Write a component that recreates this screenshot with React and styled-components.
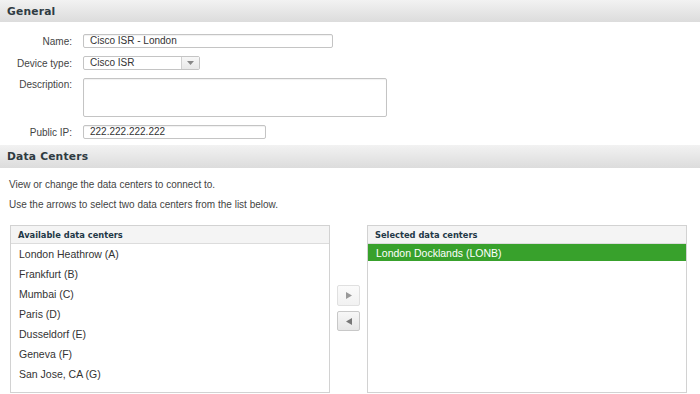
import React from 'react';
import styled, { createGlobalStyle } from 'styled-components';

const GlobalStyle = createGlobalStyle`
  body {
    margin: 0;
    background: #fff;
    font-family: 'Liberation Sans', Arial, sans-serif;
    color: #333;
  }
`;

const Page = styled.div`
  width: 700px;
  height: 394px;
  overflow: hidden;
  background: #fff;
`;

const SectionHeader = styled.div`
  height: ${(p) => p.height || 22}px;
  display: flex;
  align-items: center;
  padding-left: 7px;
  background: linear-gradient(#f2f2f2, #dcdcdc);
  font-family: 'DejaVu Sans', sans-serif;
  font-weight: 700;
  font-size: 10.7px;
  color: #2f3b42;
  letter-spacing: 0.2px;
`;

const Form = styled.div`
  display: flex;
  flex-direction: column;
  gap: 8px;
  padding: 12px 0 6px;
`;

const Row = styled.div`
  display: flex;
  align-items: ${(p) => (p.top ? 'flex-start' : 'center')};
  gap: 11px;
`;

const Label = styled.label`
  width: 72px;
  text-align: right;
  font-size: 10px;
  color: #444;
  padding-top: ${(p) => (p.top ? 1 : 0)}px;
`;

const Input = styled.div`
  box-sizing: border-box;
  width: ${(p) => p.width}px;
  height: ${(p) => p.height || 14}px;
  border: 1px solid #c4c4c4;
  border-radius: 2px;
  background: #fff;
  font-size: 10px;
  line-height: 12px;
  padding-left: 6px;
  color: #333;
  box-shadow: inset 0 1px 1px rgba(0, 0, 0, 0.06);
`;

const Select = styled.div`
  box-sizing: border-box;
  width: 117px;
  height: 14px;
  border: 1px solid #c4c4c4;
  border-radius: 2px;
  display: flex;
  font-size: 10px;
  color: #333;
`;

const SelectValue = styled.div`
  flex: 1;
  padding-left: 6px;
  line-height: 12px;
`;

const SelectArrow = styled.div`
  width: 17px;
  border-left: 1px solid #d0d0d0;
  background: linear-gradient(#f7f7f7, #e8e8e8);
  display: flex;
  align-items: center;
  justify-content: center;
`;

const Intro = styled.p`
  margin: 0;
  padding-left: 9px;
  font-size: 10px;
  line-height: 12px;
  color: #444;
`;

const IntroBlock = styled.div`
  display: flex;
  flex-direction: column;
  gap: 8px;
  padding-top: 11px;
`;

const Lists = styled.div`
  display: flex;
  align-items: flex-start;
  padding: 14px 0 0 10px;
`;

const Panel = styled.div`
  box-sizing: border-box;
  width: ${(p) => p.width}px;
  height: 168px;
  border: 1px solid #d2d2d2;
  background: #fff;
`;

const PanelHeader = styled.div`
  height: 17px;
  display: flex;
  align-items: center;
  padding-left: 7px;
  background: #f4f4f4;
  border-bottom: 1px solid #dcdcdc;
  font-family: 'DejaVu Sans', sans-serif;
  font-weight: 700;
  font-size: 8.3px;
  color: #1f3847;
`;

const Item = styled.div`
  height: ${(p) => (p.selected ? 17 : 20)}px;
  display: flex;
  align-items: center;
  padding-left: 8px;
  font-size: 10.5px;
  color: ${(p) => (p.selected ? '#fff' : '#333')};
  background: ${(p) => (p.selected ? '#38a12c' : 'transparent')};
`;

const Mover = styled.div`
  width: 37px;
  display: flex;
  flex-direction: column;
  align-items: center;
  gap: 5px;
  padding-top: 60px;
`;

const MoveButton = styled.button`
  box-sizing: border-box;
  width: 23px;
  height: ${(p) => (p.dim ? 21 : 20)}px;
  padding: 0;
  border: 1px solid ${(p) => (p.dim ? '#e0e0e0' : '#c8c8c8')};
  border-radius: 2px;
  background: ${(p) => (p.dim ? 'linear-gradient(#fbfbfb, #f1f1f1)' : 'linear-gradient(#f7f7f7, #e6e6e6)')};
  display: flex;
  align-items: center;
  justify-content: center;
`;

const Triangle = ({ dir, color }) => (
  <svg width="6" height="7" viewBox="0 0 6 7">
    {dir === 'right' ? (
      <path d="M0 0 L6 3.5 L0 7 Z" fill={color} />
    ) : (
      <path d="M6 0 L0 3.5 L6 7 Z" fill={color} />
    )}
  </svg>
);

const available = [
  'London Heathrow (A)',
  'Frankfurt (B)',
  'Mumbai (C)',
  'Paris (D)',
  'Dusseldorf (E)',
  'Geneva (F)',
  'San Jose, CA (G)',
];

const App = () => (
  <Page>
    <GlobalStyle />
    <SectionHeader>General</SectionHeader>
    <Form>
      <Row>
        <Label>Name:</Label>
        <Input width={250}>Cisco ISR - London</Input>
      </Row>
      <Row>
        <Label>Device type:</Label>
        <Select>
          <SelectValue>Cisco ISR</SelectValue>
          <SelectArrow>
            <svg width="7" height="4" viewBox="0 0 7 4">
              <path d="M0 0 L7 0 L3.5 4 Z" fill="#888" />
            </svg>
          </SelectArrow>
        </Select>
      </Row>
      <Row top>
        <Label top>Description:</Label>
        <Input width={304} height={39} />
      </Row>
      <Row>
        <Label>Public IP:</Label>
        <Input width={183}>222.222.222.222</Input>
      </Row>
    </Form>
    <SectionHeader height={23}>Data Centers</SectionHeader>
    <IntroBlock>
      <Intro>View or change the data centers to connect to.</Intro>
      <Intro>Use the arrows to select two data centers from the list below.</Intro>
    </IntroBlock>
    <Lists>
      <Panel width={320}>
        <PanelHeader>Available data centers</PanelHeader>
        {available.map((name) => (
          <Item key={name}>{name}</Item>
        ))}
      </Panel>
      <Mover>
        <MoveButton dim>
          <Triangle dir="right" color="#999" />
        </MoveButton>
        <MoveButton>
          <Triangle dir="left" color="#777" />
        </MoveButton>
      </Mover>
      <Panel width={320}>
        <PanelHeader>Selected data centers</PanelHeader>
        <Item selected>London Docklands (LONB)</Item>
      </Panel>
    </Lists>
  </Page>
);

export default App;
